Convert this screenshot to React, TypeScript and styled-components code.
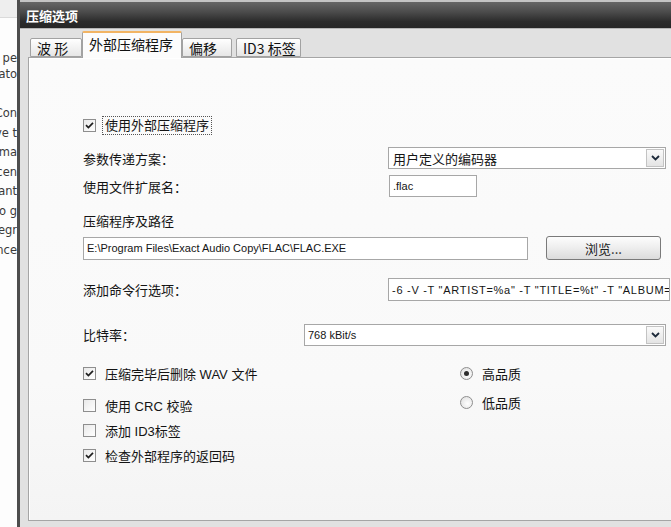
import React from "react";
import styled, { createGlobalStyle } from "styled-components";

const Global = createGlobalStyle`
  html, body { margin: 0; padding: 0; background: #ffffff; overflow: hidden; }
  #root { width: 671px; height: 527px; }
`;

const FONT = `"Liberation Sans", "Noto Sans CJK SC", sans-serif`;

const Screen = styled.div`
  width: 671px;
  height: 527px;
  display: flex;
  overflow: hidden;
  font-family: ${FONT};
  color: #111;
`;

const BackWindow = styled.div`
  width: 17px;
  flex: none;
  display: flex;
  flex-direction: column;
  background: #fdfdfd;
  overflow: hidden;
`;

const BackTop = styled.div`
  height: 17px;
  background: #eeeeee;
  border-bottom: 1px solid #dadada;
`;

const BackGroup = styled.div<{ $mt: number; $lh: number }>`
  margin-top: ${(p) => p.$mt}px;
  display: flex;
  flex-direction: column;
  line-height: ${(p) => p.$lh}px;
`;

const BackLine = styled.div`
  display: flex;
  justify-content: flex-end;
  white-space: nowrap;
  font-family: "DejaVu Sans", sans-serif;
  font-size: 11.5px;
  color: #3a3a3a;
`;

const Dialog = styled.div`
  flex: 1;
  display: flex;
  flex-direction: column;
  border-left: 3px solid #4d4d4d;
  min-width: 0;
`;

const TitleBar = styled.div`
  height: 26px;
  border-top: 2px solid #c4c4c4;
  background: linear-gradient(#666666, #4a4a4a 40%, #2b2b2b 75%, #262626);
  color: #ffffff;
  font-weight: bold;
  font-size: 13px;
  display: flex;
  align-items: center;
  padding-left: 6px;
  flex: none;
  font-family: "Noto Sans CJK SC", sans-serif;
`;

const Body = styled.div`
  flex: 1;
  display: flex;
  flex-direction: column;
  background: #e1e1e1;
  border-top: 1px solid #b5b5b5;
  padding-left: 8px;
  padding-bottom: 6px;
  min-height: 0;
`;

const TabStrip = styled.div`
  height: 28px;
  display: flex;
  align-items: flex-end;
  padding-left: 2px;
  flex: none;
  position: relative;
  z-index: 1;
`;

const Tab = styled.div<{ $w: number; $active?: boolean; $ml?: number }>`
  width: ${(p) => p.$w}px;
  margin-left: ${(p) => p.$ml ?? 0}px;
  height: ${(p) => (p.$active ? 27 : 19)}px;
  margin-bottom: ${(p) => (p.$active ? -1 : 0)}px;
  box-sizing: border-box;
  border: 1px solid #a2a2a2;
  border-bottom: ${(p) => (p.$active ? "none" : "1px solid #a2a2a2")};
  border-top: ${(p) => (p.$active ? "2px solid #f2b463" : "1px solid #a2a2a2")};
  border-radius: 2px 2px 0 0;
  background: ${(p) =>
    p.$active ? "#fcfcfc" : "linear-gradient(#ffffff, #f0f0f0 60%, #e6e6e6)"};
  font-size: 14px;
  font-family: "Noto Sans CJK SC", sans-serif;
  display: flex;
  align-items: ${(p) => (p.$active ? "flex-start" : "center")};
  padding-top: ${(p) => (p.$active ? 4 : 0)}px;
  padding-left: 6px;
  justify-content: flex-start;
  color: #111;
  line-height: 1;
  white-space: nowrap;
`;

const Panel = styled.div`
  flex: 1;
  border: 1px solid #a5a5a5;
  border-right: none;
  background: linear-gradient(#fbfbfb, #f9f9f9 70%, #f4f4f4);
  box-shadow: inset 1px 1px 0 #ffffff;
  overflow: hidden;
  display: flex;
  flex-direction: column;
  padding-left: 54px;
`;

const Row = styled.div<{ $mt: number; $h: number }>`
  margin-top: ${(p) => p.$mt}px;
  height: ${(p) => p.$h}px;
  display: flex;
  align-items: center;
  flex: none;
`;

const Label = styled.div<{ $w?: number }>`
  width: ${(p) => (p.$w ? `${p.$w}px` : "auto")};
  flex: none;
  font-size: 13px;
  font-family: "Noto Sans CJK SC", sans-serif;
  color: #141414;
  white-space: nowrap;
`;

const Box = styled.div<{ $w: number; $h: number }>`
  width: ${(p) => p.$w}px;
  height: ${(p) => p.$h}px;
  box-sizing: border-box;
  border: 1px solid #a7a7a7;
  background: #ffffff;
  display: flex;
  align-items: center;
  flex: none;
  overflow: hidden;
  white-space: nowrap;
`;

const BoxText = styled.span<{ $cjk?: boolean; $ls?: number }>`
  padding-left: ${(p) => (p.$cjk ? 4 : 3)}px;
  font-size: ${(p) => (p.$cjk ? 13 : 11)}px;
  font-family: ${(p) => (p.$cjk ? `"Noto Sans CJK SC", sans-serif` : FONT)};
  letter-spacing: ${(p) => p.$ls ?? 0}px;
  color: #151515;
  flex: 1;
  white-space: nowrap;
`;

const ArrowBtn = styled.div`
  width: 18px;
  height: 18px;
  margin-right: 1px;
  box-sizing: border-box;
  border: 1px solid #c3c3c3;
  background: linear-gradient(#fafafa, #e4e4e4);
  display: flex;
  align-items: center;
  justify-content: center;
  flex: none;
`;

const Button = styled.div`
  width: 115px;
  height: 24px;
  margin-left: 18px;
  box-sizing: border-box;
  border: 1px solid #7a7a7a;
  border-radius: 3px;
  background: linear-gradient(#fdfdfd, #ededed 50%, #dcdcdc);
  display: flex;
  align-items: center;
  justify-content: center;
  font-size: 13px;
  font-family: "Noto Sans CJK SC", sans-serif;
  color: #222;
  flex: none;
`;

const Bottom = styled.div`
  margin-top: 18px;
  display: flex;
  flex: none;
`;

const Col = styled.div<{ $w?: number }>`
  width: ${(p) => (p.$w ? `${p.$w}px` : "auto")};
  display: flex;
  flex-direction: column;
  flex: none;
`;

const CheckRow = styled.div<{ $mt?: number }>`
  margin-top: ${(p) => p.$mt ?? 0}px;
  height: 18px;
  display: flex;
  align-items: center;
  gap: 9px;
`;

const CheckBox = styled.div`
  width: 13px;
  height: 13px;
  box-sizing: border-box;
  border: 1px solid #8e8e8e;
  background: linear-gradient(135deg, #e9e9e9, #ffffff);
  display: flex;
  align-items: center;
  justify-content: center;
  flex: none;
`;

const RadioDot = styled.div`
  width: 13px;
  height: 13px;
  box-sizing: border-box;
  border: 1px solid #8e8e8e;
  border-radius: 50%;
  background: radial-gradient(circle at 60% 60%, #ffffff, #dcdcdc);
  display: flex;
  align-items: center;
  justify-content: center;
  flex: none;
`;

const Dot = styled.div`
  width: 5px;
  height: 5px;
  border-radius: 50%;
  background: #2d2d2d;
`;

const Focus = styled.div`
  outline: 1px dotted #555;
  outline-offset: 0;
  padding: 0 2px;
  margin-left: -2px;
  line-height: 16px;
`;

const Text = styled.span`
  font-size: 13px;
  font-family: ${FONT};
  color: #141414;
  white-space: nowrap;
`;

const Check = ({ on }: { on?: boolean }) => (
  <CheckBox>
    {on && (
      <svg width="9" height="9" viewBox="0 0 9 9">
        <path d="M1 4.2 L3.4 6.6 L8 1.8" fill="none" stroke="#1f1f1f" strokeWidth="1.7" />
      </svg>
    )}
  </CheckBox>
);

const Radio = ({ on }: { on?: boolean }) => <RadioDot>{on && <Dot />}</RadioDot>;

const Chevron = () => (
  <svg width="9" height="6" viewBox="0 0 9 6">
    <path d="M1 1 L4.5 4.5 L8 1" fill="none" stroke="#1d2a3a" strokeWidth="1.8" />
  </svg>
);

const Select = ({ w, text, cjk }: { w: number; text: string; cjk?: boolean }) => (
  <Box $w={w} $h={22}>
    <BoxText $cjk={cjk}>{text}</BoxText>
    <ArrowBtn>
      <Chevron />
    </ArrowBtn>
  </Box>
);

export default function App() {
  return (
    <Screen>
      <Global />
      <BackWindow>
        <BackTop />
        <BackGroup $mt={32} $lh={16}>
          <BackLine>o pe</BackLine>
          <BackLine>Creato</BackLine>
        </BackGroup>
        <BackGroup $mt={22} $lh={19.5}>
          <BackLine>Con</BackLine>
          <BackLine>ave t</BackLine>
          <BackLine>sma</BackLine>
          <BackLine>cen</BackLine>
          <BackLine>ant</BackLine>
          <BackLine>to g</BackLine>
          <BackLine>egr</BackLine>
          <BackLine>nce</BackLine>
        </BackGroup>
      </BackWindow>
      <Dialog>
        <TitleBar>压缩选项</TitleBar>
        <Body>
          <TabStrip>
            <Tab $w={52}>波 形</Tab>
            <Tab $w={100} $active>外部压缩程序</Tab>
            <Tab $w={50}>偏移</Tab>
            <Tab $w={65} $ml={4}>ID3 标签</Tab>
          </TabStrip>
          <Panel>
            <Row $mt={58} $h={18}>
              <CheckRow>
                <Check on />
                <Focus>
                  <Text>使用外部压缩程序</Text>
                </Focus>
              </CheckRow>
            </Row>
            <Row $mt={13} $h={22}>
              <Label $w={305}>参数传递方案：</Label>
              <Select w={278} text="用户定义的编码器" cjk />
            </Row>
            <Row $mt={6} $h={22}>
              <Label $w={306}>使用文件扩展名：</Label>
              <Box $w={88} $h={22}>
                <BoxText>.flac</BoxText>
              </Box>
            </Row>
            <Row $mt={15} $h={16}>
              <Label>压缩程序及路径</Label>
            </Row>
            <Row $mt={8} $h={24}>
              <Box $w={445} $h={23}>
                <BoxText>E:\Program Files\Exact Audio Copy\FLAC\FLAC.EXE</BoxText>
              </Box>
              <Button>浏览...</Button>
            </Row>
            <Row $mt={18} $h={23}>
              <Label $w={305}>添加命令行选项：</Label>
              <Box $w={282} $h={23}>
                <BoxText $ls={0.72}>-6 -V -T "ARTIST=%a" -T "TITLE=%t" -T "ALBUM=%g" -T "DATE=%y"</BoxText>
              </Box>
            </Row>
            <Row $mt={22} $h={23}>
              <Label $w={221}>比特率：</Label>
              <Select w={362} text="768 kBit/s" />
            </Row>
            <Bottom>
              <Col $w={377}>
                <CheckRow>
                  <Check on />
                  <Text>压缩完毕后删除 WAV 文件</Text>
                </CheckRow>
                <CheckRow $mt={14}>
                  <Check />
                  <Text>使用 CRC 校验</Text>
                </CheckRow>
                <CheckRow $mt={7}>
                  <Check />
                  <Text>添加 ID3标签</Text>
                </CheckRow>
                <CheckRow $mt={7}>
                  <Check on />
                  <Text>检查外部程序的返回码</Text>
                </CheckRow>
              </Col>
              <Col>
                <CheckRow>
                  <Radio on />
                  <Text>高品质</Text>
                </CheckRow>
                <CheckRow $mt={11}>
                  <Radio />
                  <Text>低品质</Text>
                </CheckRow>
              </Col>
            </Bottom>
          </Panel>
        </Body>
      </Dialog>
    </Screen>
  );
}
